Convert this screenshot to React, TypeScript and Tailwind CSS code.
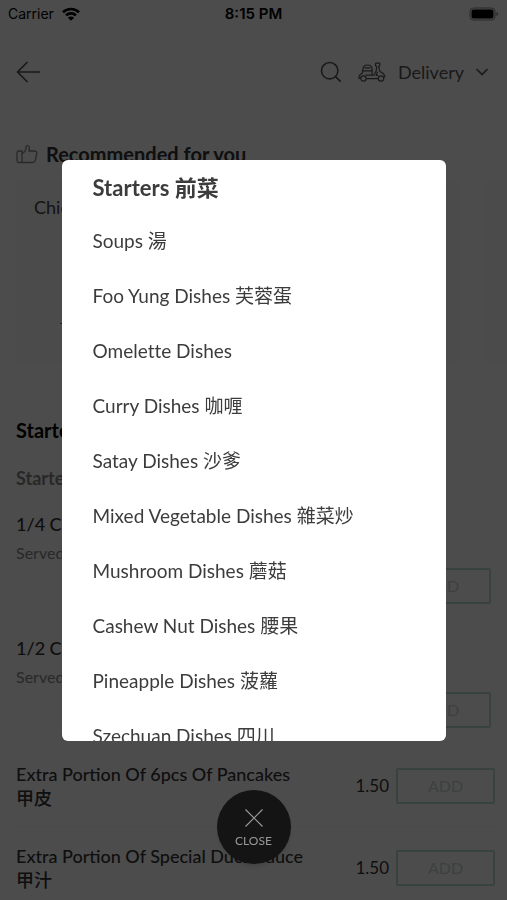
import type { ReactNode } from "react";

interface MenuRow {
  name: string;
  chinese?: string;
  note?: string;
  price?: string;
}

const categories = [
  "Soups 湯",
  "Foo Yung Dishes 芙蓉蛋",
  "Omelette Dishes",
  "Curry Dishes 咖喱",
  "Satay Dishes 沙爹",
  "Mixed Vegetable Dishes 雜菜炒",
  "Mushroom Dishes 蘑菇",
  "Cashew Nut Dishes 腰果",
  "Pineapple Dishes 菠蘿",
  "Szechuan Dishes 四川",
];

const mains: MenuRow[] = [
  { name: "1/4 C", note: "Served" },
  { name: "1/2 C", note: "Served" },
];

const extras: MenuRow[] = [
  { name: "Extra Portion Of 6pcs Of Pancakes", chinese: "甲皮", price: "1.50" },
  { name: "Extra Portion Of Special Duck Sauce", chinese: "甲汁", price: "1.50" },
];

function AddButton({ children }: { children: ReactNode }) {
  return (
    <button className="h-9 w-[99px] shrink-0 rounded-xs border-2 border-[#bcdfd4] text-base text-[#ccd8d2]">
      {children}
    </button>
  );
}

function StatusBar() {
  return (
    <div className="grid h-7 grid-cols-3 items-center px-2 font-['Inter','Noto_Sans_CJK_TC',sans-serif] text-sm text-black">
      <span className="flex items-center gap-2">
        Carrier
        <svg viewBox="0 0 18 14" className="h-[14px] w-[18px]" aria-hidden="true">
          <g fill="none" stroke="currentColor" strokeWidth="2.6">
            <path d="M1 5.2a11.5 11.5 0 0 1 16 0" />
            <path d="M4 8.4a7.2 7.2 0 0 1 10 0" />
          </g>
          <path d="M9 13.8 5.9 10.7a4.4 4.4 0 0 1 6.2 0z" fill="currentColor" />
        </svg>
      </span>
      <span className="text-center text-[15px] font-semibold">8:15 PM</span>
      <svg viewBox="0 0 30 14" className="h-[14px] w-[30px] justify-self-end" aria-hidden="true">
        <rect x="1" y="1" width="25" height="12" rx="3.5" fill="none" stroke="#888" />
        <rect x="2.5" y="2.5" width="22" height="9" rx="2" fill="#000" />
        <path d="M27.5 5v4c1-.3 1.5-1 1.5-2s-.5-1.7-1.5-2z" fill="#888" />
      </svg>
    </div>
  );
}

function Header() {
  return (
    <header className="flex h-[88px] items-center justify-between pr-[18px] pl-4 text-[#555]">
      <button aria-label="Back">
        <svg viewBox="0 0 26 22" className="h-[22px] w-[26px]" fill="none" stroke="currentColor" strokeWidth="1.7" aria-hidden="true">
          <path d="M11.5 1 1.5 11l10 10M1.5 11H24" />
        </svg>
      </button>
      <div className="flex items-center">
        <button aria-label="Search" className="mr-4">
          <svg viewBox="0 0 22 22" className="h-[22px] w-[22px]" fill="none" stroke="currentColor" strokeWidth="1.6" aria-hidden="true">
            <circle cx="9.7" cy="9.7" r="8.2" />
            <path d="m15.6 15.6 5 5" />
          </svg>
        </button>
        <button className="flex items-center text-lg">
          <svg viewBox="0 0 28 20" className="mr-3 h-5 w-7" fill="none" stroke="currentColor" strokeWidth="1.2" strokeLinejoin="round" aria-hidden="true">
            {/* box and rear */}
            <path d="M5 8.8V7c0-2.4 1.8-4 4.5-4S14 4.6 14 7v1.8M3.8 8.8h11M6.5 5.8h6" />
            <path d="M4.5 8.8v2.5C2.2 12 .8 14 .8 16.5h1.8M14 8.8v4.4H7.5M8.2 16.7h12" />
            {/* column and front */}
            <path d="M17.5 1.2h4.3v2.6l-1.2.8 1.4 5c3 1 4.7 2.8 4.9 6M17.5 1.2v2.6l1.2.8-.5 4.4-2.5 4.2h-1.7M19.5 9.8l-1.5 3.6h2" />
            <circle cx="5.4" cy="16.5" r="2.7" />
            <circle cx="23" cy="16.5" r="2.7" />
          </svg>
          Delivery
          <svg viewBox="0 0 14 10" className="ml-[11px] h-[10px] w-[14px]" fill="none" stroke="currentColor" strokeWidth="1.7" aria-hidden="true">
            <path d="m1.5 2 5.5 5.5L12.5 2" />
          </svg>
        </button>
      </div>
    </header>
  );
}

function Recommended() {
  return (
    <section className="pt-[26px] pl-4">
      <h2 className="flex h-6 items-center gap-2 text-xl font-bold text-[#333]">
        <svg viewBox="0 0 22 20" className="h-5 w-[22px] text-[#888]" fill="none" stroke="currentColor" strokeWidth="1.3" strokeLinejoin="round" aria-hidden="true">
          <path d="M1 9c0-1.3.7-2 2-2h3v11.5H3c-1.3 0-2-.7-2-2z" />
          <path d="M6 9.5c2.5-1 4-3 4-6 0-2.8 3.5-2.5 3.5.5 0 1.2-.3 2-.7 3h5.7c1.7 0 2.5 1 2.2 2.5l-1.3 6.5c-.3 1.7-1.3 2.5-3 2.5H6" />
        </svg>
        Recommended for you
      </h2>
      <div className="mt-[14px] flex h-[184px] gap-[26px] overflow-hidden">
        <article className="w-[442px] shrink-0 bg-[#fafafa] px-[18px] py-[13px] text-lg text-[#444]">
          Chicken
          <hr className="mt-[102px] ml-[26px] w-20 border-[#777]" />
        </article>
        <article className="w-40 shrink-0 bg-[#fafafa]" />
      </div>
    </section>
  );
}

function MenuList() {
  return (
    <section className="px-4 pt-[52px]">
      <h2 className="text-xl leading-7 font-bold text-black">Starters</h2>
      <h3 className="mt-5 text-lg leading-7 font-bold text-[#888]">Starters</h3>
      {mains.map((row) => (
        <div key={row.name} className="pt-[18px] pb-3">
          <p className="text-lg leading-7 font-medium text-[#333]">{row.name}</p>
          <p className="text-base leading-[30px] text-[#888]">{row.note}</p>
          <div className="flex justify-end">
            <AddButton>ADD</AddButton>
          </div>
        </div>
      ))}
      <div className="-mr-1 pt-[5px]">
        {extras.map((row) => (
          <div key={row.name} className="flex h-[82px] items-center border-b border-[#f4f4f4]">
            <div className="flex-1 text-lg leading-6 font-medium text-[#333]">
              <p>{row.name}</p>
              <p>{row.chinese}</p>
            </div>
            <span className="mr-[7px] text-[17px] text-[#333]">{row.price}</span>
            <AddButton>ADD</AddButton>
          </div>
        ))}
      </div>
    </section>
  );
}

function CategoryDialog() {
  return (
    <div className="fixed inset-0 flex flex-col items-center bg-black/70 pt-40">
      <div
        role="dialog"
        aria-label="Menu categories"
        className="h-[581px] w-[384px] shrink-0 overflow-hidden rounded-md bg-white px-[31px] text-[#3c3c3c] [font-variant-ligatures:none]"
      >
        <nav className="flex flex-col">
          <a href="#starters" className="pt-3 pb-[10px] text-[22px] leading-8 font-bold">
            Starters 前菜
          </a>
          {categories.map((category) => (
            <a key={category} href="#menu" className="flex h-[55px] items-center text-[19px] whitespace-nowrap">
              {category}
            </a>
          ))}
        </nav>
      </div>
      <button className="mt-[49px] flex size-[74px] shrink-0 flex-col items-center rounded-full bg-[#141414] pt-[18px] text-xs text-[#999] shadow-md">
        <svg viewBox="0 0 20 20" className="size-5" fill="none" stroke="currentColor" strokeWidth="1.2" aria-hidden="true">
          <path d="m1.5 1.5 17 17m0-17-17 17" />
        </svg>
        <span className="mt-[5px]">CLOSE</span>
      </button>
    </div>
  );
}

export default function App() {
  return (
    <div className="h-screen overflow-hidden bg-white font-['Lato','Noto_Sans_CJK_TC',sans-serif]">
      <StatusBar />
      <Header />
      <Recommended />
      <MenuList />
      <CategoryDialog />
    </div>
  );
}
